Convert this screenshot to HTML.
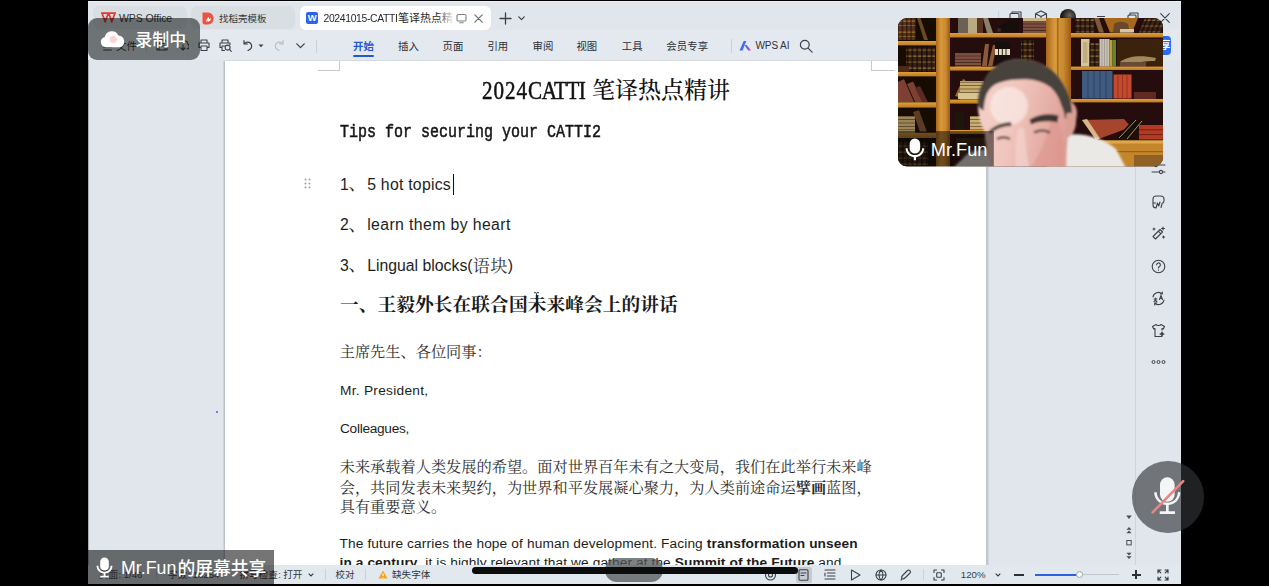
<!DOCTYPE html>
<html lang="zh">
<head>
<meta charset="utf-8">
<title>Screen share</title>
<style>
*{box-sizing:border-box;margin:0;padding:0}
html,body{width:1269px;height:586px;overflow:hidden;background:#000}
body{position:relative;font-family:"Liberation Sans",sans-serif;color:#222}
.abs{position:absolute}
.nw{white-space:nowrap}
#screen{left:88px;top:1px;width:1093px;height:583.300px;background:#e1e6ed;overflow:hidden}
/* everything inside #screen uses page coordinates via an inner offset layer */
#L{position:absolute;left:-88px;top:-1px;width:1269px;height:586px}
.tab{top:6px;height:23px;border-radius:6px;background:#d9dee3}
.tabtxt{font-size:10.5px;color:#333;line-height:12px;white-space:nowrap}
.menu{top:40px;font-size:10.5px;line-height:12px;color:#2b2f36;white-space:nowrap;width:44px;text-align:center}
.ico{stroke:#3c4047;fill:none;stroke-width:1.1;stroke-linecap:round;stroke-linejoin:round}
.sb{font-size:9.5px;line-height:11px;color:#33373d;white-space:nowrap;top:569px}
.ln{position:absolute;white-space:nowrap;transform-origin:0 50%}
.cj{position:absolute;white-space:nowrap;text-align:justify;text-align-last:justify;font-family:"Liberation Serif","Noto Serif CJK SC",serif;color:#2a2a2a}
.h{color:transparent!important;-webkit-text-stroke:0!important}
.cj{color:transparent!important}
.en{font-family:"Liberation Sans",sans-serif;color:#1d1d1d}
.us{font-family:"Liberation Sans","Noto Sans CJK SC",sans-serif}
.ds{font-family:"Liberation Serif","Noto Serif CJK SC",serif}
</style>
</head>
<body>
<div id="screen" class="abs"><div id="L">

<!-- ===== title/tab bar ===== -->
<div class="abs" style="left:88px;top:1px;width:1093px;height:29px;background:#e1e6ed"></div>
<div class="abs" style="left:88px;top:1px;width:1093px;height:1px;background:#eef1f5"></div>

<!-- tab 1 : WPS Office -->
<div class="abs tab" style="left:93px;width:94px"></div>
<svg class="abs" style="left:101px;top:12px" width="15" height="11" viewBox="0 0 15 11"><path d="M1 1.200h6.300l-3.150 8.300zM7.700 1.200h6.300l-3.150 8.300z" fill="none" stroke="#e8372c" stroke-width="1.700" stroke-linejoin="miter"/></svg>
<div class="abs tabtxt" style="left:119px;top:12px;letter-spacing:-.1px">WPS Office</div>
<!-- tab 2 -->
<div class="abs tab" style="left:191px;width:104px"></div>
<svg class="abs" style="left:202px;top:12px" width="12" height="13" viewBox="0 0 12 13"><path d="M0.5 0.6h5.6a5.6 5.900 0 0 1 0 11.800h-3.800a1.800 1.800 0 0 1-1.800-1.800z" fill="#ee5240"/><path d="M4.200 9.600c0-2.200 1.200-3.600 2.900-4.600-0.300 1.200 0 1.800 0.600 2.200 0.500-0.500 0.700-1 0.600-1.700 1 1.400 0.400 3.600-1.600 4.100z" fill="#fff"/></svg>
<div class="abs tabtxt h" style="left:219px;top:12.5px;font-size:9.5px"></div>
<!-- active tab -->
<div class="abs" style="left:300px;top:6px;width:191px;height:23.800px;background:#fff;border-radius:6px"></div>
<div class="abs" style="left:306px;top:12px;width:12.4px;height:12.4px;background:#2b62ee;border-radius:2px;color:#fff;font-size:9.5px;font-weight:bold;line-height:12.4px;text-align:center">W</div>
<div class="abs tabtxt" style="left:323.5px;top:12px;font-size:11px;width:130px;overflow:hidden;color:#262a30;-webkit-mask-image:linear-gradient(90deg,#000 88%,transparent 100%);mask-image:linear-gradient(90deg,#000 88%,transparent 100%)"><span id="tabl" style="font-size:10.400px;letter-spacing:-.35px">20241015-CATTI</span><span class="h"></span></div>
<svg class="abs ico" style="left:456px;top:13px;stroke:#7b8088" width="11" height="11" viewBox="0 0 11 11"><rect x="1" y="1.500" width="9" height="6.500" rx="1.200"/><path d="M3.800 9.800h3.400"/></svg>
<svg class="abs ico" style="left:474px;top:14px;stroke:#666b73;stroke-width:1.1" width="9" height="9" viewBox="0 0 9 9"><path d="M0.8 0.8l7.400 7.400M8.200 0.800l-7.400 7.400"/></svg>
<svg class="abs ico" style="left:499px;top:12px;stroke:#3c4047;stroke-width:1.3" width="13" height="13" viewBox="0 0 13 13"><path d="M6.500 1v11M1 6.500h11"/></svg>
<svg class="abs ico" style="left:518px;top:16px;stroke-width:1.2" width="7" height="5" viewBox="0 0 7 5"><path d="M0.8 0.8l2.700 2.800 2.700-2.800"/></svg>
<!-- window controls (partly hidden behind camera tile) -->
<div class="abs" style="left:998px;top:11px;width:1px;height:14px;background:#cdd2da"></div>
<svg class="abs ico" style="left:1009px;top:11px" width="13" height="13" viewBox="0 0 13 13"><rect x="1" y="2.500" width="9" height="9.500" rx="1"/><path d="M3 2.500v-1.500h9v9.500h-2"/></svg>
<svg class="abs ico" style="left:1034px;top:10px" width="14" height="14" viewBox="0 0 14 14"><path d="M7 1l5.500 2.800v6.400l-5.500 2.800-5.500-2.800v-6.400zM1.500 3.800l5.500 2.800 5.500-2.800M7 6.600v6.400"/></svg>
<div class="abs" style="left:1060px;top:9px;width:16px;height:16px;border-radius:50%;background:radial-gradient(circle at 60% 40%,#6b6560 0,#1d1b1a 55%,#0d0d0d 100%)"></div>
<div class="abs" style="left:1097px;top:16px;width:8px;height:1.3px;background:#3c4047"></div>
<svg class="abs ico" style="left:1127px;top:12px" width="12" height="12" viewBox="0 0 12 12"><rect x="1" y="3" width="8" height="8" rx="1"/><path d="M3 3v-2h8v8h-2"/></svg>
<svg class="abs ico" style="left:1160px;top:13px;stroke-width:1.1" width="10" height="10" viewBox="0 0 10 10"><path d="M0.700 0.700l8.600 8.600M9.300 0.700l-8.600 8.600"/></svg>

<!-- TOOLBAR -->
<div class="abs" style="left:88px;top:30px;width:1093px;height:30px;background:#e3e9ee"></div>

<!-- quick access (left) -->
<svg class="abs ico" style="left:103px;top:43px;stroke-width:1.1" width="9" height="8" viewBox="0 0 9 8"><path d="M0.600 1h7.800M0.600 4h7.800M0.600 7h7.800"/></svg>
<div class="abs tabtxt h" style="left:116px;top:41px;font-size:10.5px"></div>
<div class="abs" style="left:146px;top:40px;width:1px;height:13px;background:#cdd2da"></div>
<svg class="abs ico" style="left:156px;top:39px" width="12" height="12" viewBox="0 0 12 12"><path d="M1 1h8l2 2v8h-10zM3 1v3.500h5v-3.500M3 11v-4h6v4"/></svg>
<svg class="abs ico" style="left:177px;top:39px" width="12" height="12" viewBox="0 0 12 12"><path d="M2 8.500a3.200 3.200 0 1 1 3.200-6 3.600 3.600 0 0 1 5.800 3 2.400 2.400 0 0 1-1 4.500M6 6v5M4 9l2 2 2-2"/></svg>
<svg class="abs ico" style="left:198px;top:39px" width="12" height="12" viewBox="0 0 12 12"><path d="M3 4v-3h6v3M3 8.500h-2v-4.500h10v4.500h-2M3 7h6v4.500h-6z"/></svg>
<svg class="abs ico" style="left:219px;top:39px" width="13" height="13" viewBox="0 0 13 13"><path d="M3 4v-3h6v3M3 8.500h-2v-4.500h10v1.500M3 7h2.500M3 7v4.500h2.500"/><circle cx="8.600" cy="8.600" r="2.500"/><path d="M10.500 10.500l1.800 1.800"/></svg>
<svg class="abs ico" style="left:243px;top:39px;stroke-width:1.2" width="10" height="12" viewBox="0 0 10 12"><path d="M1 1.500v3.500h3.500M1.200 5a4 4 0 1 1 5.500 5.500l-1.700 1"/></svg>
<svg class="abs" style="left:258px;top:44px" width="6" height="4" viewBox="0 0 6 4"><path d="M0.500 0.500l2.500 2.800 2.500-2.800z" fill="#3c4047"/></svg>
<svg class="abs ico" style="left:274px;top:39px;stroke:#b9bec7;stroke-width:1.2" width="10" height="12" viewBox="0 0 10 12"><path d="M9 1.500v3.500h-3.500M8.800 5a4 4 0 1 0-5.500 5.500l1.700 1"/></svg>
<svg class="abs ico" style="left:296px;top:43px;stroke-width:1.2" width="9" height="6" viewBox="0 0 9 6"><path d="M0.800 0.800l3.700 3.900 3.700-3.900"/></svg>
<div class="abs" style="left:316px;top:40px;width:1px;height:13px;background:#cdd2da"></div>
<!-- ribbon menu -->
<div class="abs menu h" style="left:341.300px;color:#2458d6;font-weight:bold"></div>
<div class="abs" style="left:353px;top:55px;width:20.600px;height:1.800px;background:#2458d6;border-radius:1px"></div>
<div class="abs menu h" style="left:386.200px"></div>
<div class="abs menu h" style="left:430.700px"></div>
<div class="abs menu h" style="left:475.500px"></div>
<div class="abs menu h" style="left:520.700px"></div>
<div class="abs menu h" style="left:565px"></div>
<div class="abs menu h" style="left:610.300px"></div>
<div class="abs menu h" style="left:657.300px;width:60px"></div>
<div class="abs" style="left:731px;top:38.500px;width:1px;height:14px;background:#cdd2da"></div>
<svg class="abs" style="left:739px;top:40px" width="13" height="11" viewBox="0 0 13 11"><defs><linearGradient id="ai" x1="0" y1="0" x2="1" y2="1"><stop offset="0" stop-color="#3b6cf6"/><stop offset=".55" stop-color="#7a4cf0"/><stop offset="1" stop-color="#f0568b"/></linearGradient></defs><path d="M0.500 10.500l4.200-9.600h2.600l-3.800 9.600z" fill="#3b6cf6"/><path d="M5.600 5.200l2-0.300 4.600 5.600h-3z" fill="url(#ai)"/></svg>
<div class="abs menu" style="left:755.500px;width:33px;text-align:left;font-size:10px;color:#2f333a;letter-spacing:-.1px">WPS AI</div>
<svg class="abs ico" style="left:799px;top:39px;stroke-width:1.200" width="14" height="14" viewBox="0 0 14 14"><circle cx="5.800" cy="5.800" r="4.400"/><path d="M9.100 9.100l4 4"/></svg>
<!-- share button peeking out right of camera tile -->
<div class="abs" style="left:1140px;top:36px;width:30.500px;height:18.600px;border-radius:4px;background:#2a6af2"></div>
<div class="abs" style="left:1163px;top:40px;font-size:9.500px;line-height:11px;color:#fff;font-weight:bold;width:6px;overflow:hidden;direction:rtl;color:transparent"></div>


<!-- ===== document area ===== -->
<div class="abs" style="left:88px;top:60px;width:1093px;height:505px;background:#e1e6ed"></div>
<div class="abs" id="page" style="left:225px;top:60.700px;width:761.300px;height:510px;background:#fff;box-shadow:-1.500px 0 0 #bcc3ce,2.500px 0 0 #c2c8cf,0 -1px 0 #d5dae1"></div>

<!-- crop marks -->
<div class="abs" style="left:318px;top:61px;width:22px;height:9.500px;border-right:1px solid #c9c9c9;border-bottom:1px solid #c9c9c9"></div>
<div class="abs" style="left:871px;top:61px;width:24px;height:9.500px;border-left:1px solid #c9c9c9;border-bottom:1px solid #c9c9c9"></div>
<!-- title -->
<div id="t1" class="ln" style="left:481.500px;top:76px;height:30px;line-height:30px;font-family:'Liberation Serif',serif;font-size:24.500px;color:#111;font-weight:bold"><span id="t1a" style="display:inline-block;transform:scaleX(.86);transform-origin:0 50%;font-weight:normal;-webkit-text-stroke:.5px #111;letter-spacing:-.54px"><span style="letter-spacing:1.130px">2024</span>CATTI</span></div>
<div id="t1b" class="cj" style="left:592px;top:76px;width:138px;height:30px;line-height:30px;font-size:22.400px;font-weight:500"></div>
<!-- subtitle (monospace SimSun-like latin) -->
<div id="t2" class="ln" style="left:340px;top:122.100px;height:22px;line-height:22px;font-family:'Liberation Mono',monospace;font-size:15px;font-weight:normal;-webkit-text-stroke:.45px #161616;color:#161616;transform:scaleY(1.24)">Tips for securing your CATTI2</div>
<!-- numbered tips -->
<svg class="abs" style="left:304px;top:178px" width="7" height="11" viewBox="0 0 7 11" fill="#9a9fa8"><circle cx="1.500" cy="1.500" r="1"/><circle cx="5.500" cy="1.500" r="1"/><circle cx="1.500" cy="5.500" r="1"/><circle cx="5.500" cy="5.500" r="1"/><circle cx="1.500" cy="9.500" r="1"/><circle cx="5.500" cy="9.500" r="1"/></svg>
<div class="ln en" style="left:340px;top:174px;height:22px;line-height:22px;font-size:15.800px">1<span class="h" style="display:inline-block;width:18.400px;height:10px;overflow:hidden;text-align:left;font-family:'Liberation Serif',serif"></span><span id="l1" style="letter-spacing:.25px">5 hot topics</span></div>
<div class="abs" style="left:452.600px;top:173.500px;width:1.400px;height:21.500px;background:#111"></div>
<div class="ln en" style="left:340px;top:214.300px;height:22px;line-height:22px;font-size:15.800px">2<span class="h" style="display:inline-block;width:18.400px;height:10px;overflow:hidden;text-align:left;font-family:'Liberation Serif',serif"></span><span id="l2" style="letter-spacing:.39px">learn them by heart</span></div>
<div class="ln en" style="left:340px;top:254.600px;height:22px;line-height:22px;font-size:15.800px">3<span class="h" style="display:inline-block;width:18.400px;height:10px;overflow:hidden;text-align:left;font-family:'Liberation Serif',serif"></span><span id="l3" style="letter-spacing:0">Lingual blocks(<span class="h" style="display:inline-block;width:35.200px;height:12px;overflow:hidden;font-family:'Liberation Serif',serif;font-size:16.500px;letter-spacing:0"></span>)</span></div>
<!-- heading -->
<div id="h1" class="cj" style="left:340px;top:291.700px;width:338px;height:24px;line-height:24px;font-size:17.800px;font-weight:bold;color:#1a1a1a"></div>
<!-- I-beam mouse cursor -->
<svg class="abs" style="left:533px;top:292px" width="7" height="13" viewBox="0 0 7 13"><path d="M1 0.700h2l0.500 0.600 0.500-0.600h2M3.500 1.300v10.400M1 12.300h2l0.500-0.600 0.500 0.600h2M2.300 6.500h2.400" stroke="#222" stroke-width=".9" fill="none"/></svg>
<!-- body -->
<div id="b1" class="cj" style="left:340px;top:341.600px;width:152px;height:21px;line-height:21px;font-size:15px"></div>
<div id="b2" class="ln en" style="left:340px;top:380.600px;height:20px;line-height:20px;font-size:13.700px;letter-spacing:.28px">Mr. President,</div>
<div id="b3" class="ln en" style="left:340px;top:418.900px;height:20px;line-height:20px;font-size:13.700px;letter-spacing:-.3px">Colleagues,</div>
<div id="b4" class="cj" style="left:340px;top:456.600px;width:532px;height:21px;line-height:21px;font-size:15px"></div>
<div id="b5" class="cj" style="left:340px;top:476.800px;width:532px;height:21px;line-height:21px;font-size:15px"></div>
<div id="b6" class="cj" style="left:340px;top:495.600px;width:106.400px;height:21px;line-height:21px;font-size:15px"></div>
<div id="b7" class="ln en" style="left:339.500px;top:534.200px;height:20px;line-height:20px;font-size:13.700px;letter-spacing:.13px">The future carries the hope of human development. Facing <b>transformation unseen</b></div>
<div id="b8" class="ln en" style="left:339.500px;top:552.800px;height:20px;line-height:20px;font-size:13.700px;letter-spacing:.1px"><b>in a century</b>, it is highly relevant that we gather at the <b>Summit of the Future</b> and</div>


<div class="abs" style="left:216.200px;top:410.800px;width:2px;height:2px;border-radius:50%;background:#3b63e6"></div>
<div class="abs" style="left:88px;top:60px;width:1.200px;height:524px;background:#a9aeb5"></div>
<!-- ===== right sidebar ===== -->
<div class="abs" style="left:1135px;top:30px;width:1px;height:535px;background:#cfd4dc"></div>

<svg class="abs ico" style="left:1151px;top:162px" width="15" height="14" viewBox="0 0 15 14"><path d="M1 3h13M1 10h13"/><circle cx="5" cy="3" r="1.600" fill="#e1e6ed"/><circle cx="10" cy="10" r="1.600" fill="#e1e6ed"/></svg>
<svg class="abs ico" style="left:1151px;top:195px" width="15" height="14" viewBox="0 0 15 14"><path d="M2 4c0-2 1.500-3 3.500-3h4c2 0 3.500 1 3.500 3v2c0 1.500-1 2-2 2.500M2 4v6c0 2 1 3 3 3M2 8h2.500M5 13l1.500-5 1.200 3 1.300-4M11 9l-1 3.500"/></svg>
<svg class="abs ico" style="left:1151px;top:226px" width="15" height="15" viewBox="0 0 15 15"><path d="M2 10.500l7-7 2.500 2.500-7 7zM7.300 5.200l2.500 2.500M12 1v3M10.500 2.500h3M3 2v2M2 3h2M12.500 10v2M11.500 11h2"/></svg>
<svg class="abs ico" style="left:1151px;top:259px" width="15" height="15" viewBox="0 0 15 15"><circle cx="7.500" cy="7.500" r="6.300"/><path d="M5.600 5.800a1.900 1.900 0 1 1 2.800 1.700c-0.600 0.400-0.900 0.700-0.900 1.500M7.500 11v0.300"/></svg>
<svg class="abs ico" style="left:1151px;top:291px" width="15" height="15" viewBox="0 0 15 15"><path d="M2 6a5.500 5.500 0 0 1 9-3.300M11.300 1v2h-2M13 9a5.500 5.500 0 0 1-9 3.300M3.700 14v-2h2M8.500 8.500l1.500-4 1.500 4M9 7.500h2M3 8h3M4.500 7v1c0 1.500-0.500 2.200-1.500 2.700M4.500 9c0.300 0.800 0.800 1.300 1.500 1.700"/></svg>
<svg class="abs ico" style="left:1151px;top:323px" width="15" height="15" viewBox="0 0 15 15"><path d="M5 1.500l-3.500 2 1.200 2.500 1.300-0.500v8h7v-3M10 1.500l3.500 2-1.200 2.500-1.300-0.500v1.500M5 1.500c0.500 1.300 4.500 1.300 5 0M11 9l0.600 1.400 1.400 0.600-1.400 0.600-0.600 1.400-0.600-1.400-1.400-0.600 1.400-0.600z"/></svg>
<svg class="abs" style="left:1151px;top:359px" width="15" height="6" viewBox="0 0 15 6" fill="none" stroke="#3c4047" stroke-width="1"><circle cx="2.500" cy="3" r="1.500"/><circle cx="7.500" cy="3" r="1.500"/><circle cx="12.500" cy="3" r="1.500"/></svg>
<!-- scroll nav buttons -->
<svg class="abs" style="left:1125px;top:514px" width="8" height="46" viewBox="0 0 8 46" fill="#4a4e55" stroke="none"><path d="M1.200 1.500h5.600l-2.800 3.600z"/><path d="M4 13l2.600 2.800h-5.200zM4 16.500l2.600 2.800h-5.200z"/><rect x="1.800" y="26.500" width="4.400" height="4.400" fill="none" stroke="#4a4e55" stroke-width="1"/><path d="M4 41.500l-2.600-2.800h5.200zM4 45l-2.600-2.800h5.200z"/></svg>


<!-- ===== status bar ===== -->
<div class="abs" style="left:88px;top:565.300px;width:1093px;height:20px;background:#e1e8ee"></div>

<div class="abs sb h" style="left:99px"></div><div class="abs sb" style="left:118.500px;color:#50555c">: 1/46</div>
<div class="abs" style="left:156px;top:569px;width:1px;height:11px;background:#cdd2da"></div>
<div class="abs sb h" style="left:168px"></div><div class="abs sb" style="left:187.500px;color:#50555c">: 16254</div>
<div class="abs" style="left:222px;top:569px;width:1px;height:11px;background:#cdd2da"></div>
<div class="abs sb h" style="left:239.400px"></div><div class="abs sb" style="left:278.300px">:</div><div class="abs sb h" style="left:283.200px"></div>
<svg class="abs" style="left:308px;top:573px" width="6" height="4" viewBox="0 0 6 4"><path d="M0.700 0.700l2.300 2.300 2.300-2.300" stroke="#33373d" stroke-width="1.100" fill="none"/></svg>
<div class="abs" style="left:325px;top:569px;width:1px;height:11px;background:#cdd2da"></div>
<div class="abs sb h" style="left:335.500px"></div>
<div class="abs" style="left:365px;top:569px;width:1px;height:11px;background:#cdd2da"></div>
<svg class="abs" style="left:377.500px;top:569.500px" width="10" height="9" viewBox="0 0 10 9"><path d="M5 0.500l4.500 8h-9z" fill="#f2a51d"/><path d="M5 3.300v2.700M5 7v0.600" stroke="#fff" stroke-width="1"/></svg>
<div class="abs sb h" style="left:392px"></div>
<!-- right part -->
<svg class="abs ico" style="left:764px;top:568.500px" width="13" height="12" viewBox="0 0 13 12"><circle cx="6.500" cy="6" r="5"/><circle cx="6.500" cy="6" r="2"/></svg>
<div class="abs" style="left:795.500px;top:566.500px;width:16px;height:16px;background:#c6cbd3;border-radius:2px"></div>
<svg class="abs ico" style="left:798px;top:568.500px" width="11" height="12" viewBox="0 0 11 12"><rect x="1" y="0.800" width="9" height="10.400" rx="1"/><path d="M3 4h5M3 6.500h3"/></svg>
<svg class="abs ico" style="left:823.500px;top:569px" width="12" height="11" viewBox="0 0 12 11"><path d="M1 1h10M3.500 4h7.500M3.500 7h7.500M1 10h10M1 4v3"/></svg>
<svg class="abs ico" style="left:849.500px;top:568.500px" width="11" height="12" viewBox="0 0 11 12"><path d="M1.500 1l8.500 5-8.500 5z"/></svg>
<svg class="abs ico" style="left:875px;top:569px" width="12" height="12" viewBox="0 0 12 12"><circle cx="6" cy="6" r="5"/><path d="M1 6h10M6 1c-2.600 2.500-2.600 7.500 0 10M6 1c2.600 2.500 2.600 7.500 0 10"/></svg>
<svg class="abs ico" style="left:900px;top:568.500px" width="12" height="12" viewBox="0 0 12 12"><path d="M2 10c-1-1.500 0-3 1-4l4.500-4.500c1.500-1.300 3.800 0.800 2.500 2.500l-4.500 4.500c-1 1-2.500 1.500-3.500 1.500zM2 10l-1 1.200"/></svg>
<div class="abs" style="left:922.500px;top:569px;width:1px;height:11px;background:#cdd2da"></div>
<svg class="abs ico" style="left:933px;top:569px" width="12" height="12" viewBox="0 0 12 12"><path d="M1 3.500v-2.500h2.500M8.500 1h2.500v2.500M11 8.500v2.500h-2.500M3.500 11h-2.500v-2.500"/><rect x="3.700" y="3.700" width="4.600" height="4.600" rx=".8"/></svg>
<div class="abs sb" style="left:960.800px;font-size:9.700px;top:569.300px;color:#3a3e45">120%</div>
<svg class="abs" style="left:994.500px;top:573px" width="6" height="4" viewBox="0 0 6 4"><path d="M0.700 0.700l2.300 2.300 2.300-2.300" stroke="#33373d" stroke-width="1.100" fill="none"/></svg>
<div class="abs" style="left:1014px;top:574px;width:9.500px;height:1.600px;background:#2b2f36"></div>
<div class="abs" style="left:1035px;top:574px;width:84px;height:1.300px;background:#c3c8d0"></div>
<div class="abs" style="left:1035px;top:573.700px;width:44px;height:2px;background:#2a62e0"></div>
<div class="abs" style="left:1076px;top:571.200px;width:7px;height:7px;border-radius:50%;background:#fff;border:1px solid #9aa0aa"></div>
<div class="abs" style="left:1131.500px;top:574px;width:9px;height:1.600px;background:#2b2f36"></div>
<div class="abs" style="left:1135.200px;top:570.300px;width:1.600px;height:9px;background:#2b2f36"></div>
<svg class="abs ico" style="left:1156.500px;top:569px;stroke-width:1.200" width="12" height="12" viewBox="0 0 12 12"><path d="M1 4v-3h3M8 1h3v3M11 8v3h-3M4 11h-3v-3M1 1l2.800 2.800M11 1l-2.800 2.800M11 11l-2.800-2.800M1 11l2.800-2.800"/></svg>


<!-- CJK-A -->
<svg class="abs" style="left:0;top:0;pointer-events:none" width="1269" height="586" viewBox="0 0 1269 586"><defs><clipPath id="tabclip"><rect x="390" y="8" width="63" height="20"/></clipPath><clipPath id="btnclip"><rect x="1140" y="36" width="30.500" height="18.600"/></clipPath><linearGradient id="tabfade" x1="0" y1="0" x2="1" y2="0"><stop offset="0" stop-color="#fff" stop-opacity="0"/><stop offset="1" stop-color="#fff"/></linearGradient></defs>
<text class="us" x="219" y="21.710" font-size="9.500" fill="#33373d">找稻壳模板</text>
<g clip-path="url(#tabclip)"><text class="us" x="398" y="22.280" font-size="11" fill="#262a30">笔译热点精讲</text></g><rect x="438" y="9" width="16" height="19" fill="url(#tabfade)"/>
<text class="us" x="116" y="50.390" font-size="10.500" fill="#30343a">文件</text>
<text class="us" x="353" y="50.150" font-size="10.400" font-weight="bold" fill="#2458d6">开始</text>
<text class="us" x="398" y="50.150" font-size="10.400" fill="#2b2f36">插入</text>
<text class="us" x="442.500" y="50.150" font-size="10.400" fill="#2b2f36">页面</text>
<text class="us" x="487.400" y="50.150" font-size="10.400" fill="#2b2f36">引用</text>
<text class="us" x="532.500" y="50.150" font-size="10.400" fill="#2b2f36">审阅</text>
<text class="us" x="576.400" y="50.150" font-size="10.400" fill="#2b2f36">视图</text>
<text class="us" x="621.800" y="50.150" font-size="10.400" fill="#2b2f36">工具</text>
<text class="us" x="666.300" y="50.150" font-size="10.400" letter-spacing="0.100" fill="#2b2f36">会员专享</text>
<g clip-path="url(#btnclip)"><text class="us" x="1160.500" y="49.100" font-size="10" font-weight="bold" fill="#fff">享</text></g>
<text class="us" x="99" y="578.250" font-size="9.600" fill="#50555c">页面</text>
<text class="us" x="168" y="578.250" font-size="9.600" fill="#50555c">字数</text>
<text class="us" x="239.400" y="578.250" font-size="9.600" fill="#33373d">拼写检查</text>
<text class="us" x="283.200" y="578.250" font-size="9.600" fill="#33373d">打开</text>
<text class="us" x="335.500" y="578.170" font-size="9.400" fill="#33373d">校对</text>
<text class="us" x="392" y="578.250" font-size="9.600" fill="#33373d">缺失字体</text>
<text class="ds" x="591.900" y="97.940" font-size="23" font-weight="500" fill="#111" textLength="138" lengthAdjust="spacing">笔译热点精讲</text>
<text class="ds" x="348.600" y="190.200" font-size="17.600" fill="#1d1d1d">、</text>
<text class="ds" x="348.600" y="230.500" font-size="17.600" fill="#1d1d1d">、</text>
<text class="ds" x="348.600" y="270.900" font-size="17.600" fill="#1d1d1d">、</text>
<text class="ds" x="472.700" y="271.740" font-size="17.200" letter-spacing="0.400" fill="#333">语块</text>
<text class="ds" x="340" y="311.210" font-size="18.700" font-weight="bold" fill="#1a1a1a" textLength="337.700" lengthAdjust="spacing">一、王毅外长在联合国未来峰会上的讲话</text>
<text class="ds" x="339.700" y="357.480" font-size="15.200" fill="#2e2e2e" textLength="152" lengthAdjust="spacing">主席先生、各位同事：</text>
<text class="ds" x="339.700" y="472.380" font-size="15.200" fill="#2e2e2e" textLength="532" lengthAdjust="spacing">未来承载着人类发展的希望。面对世界百年未有之大变局，我们在此举行未来峰</text>
<text class="ds" x="339.700" y="492.580" font-size="15.200" fill="#2e2e2e" textLength="532" lengthAdjust="spacing">会，共同发表未来契约，为世界和平发展凝心聚力，为人类前途命运<tspan font-weight="bold">擘画</tspan>蓝图，</text>
<text class="ds" x="339.700" y="511.980" font-size="15.200" fill="#2e2e2e" textLength="106.400" lengthAdjust="spacing">具有重要意义。</text>
</svg>
<!-- /CJK-A -->
</div></div>

<!-- ===== overlays (meeting client) ===== -->

<!-- recording badge -->
<div class="abs" style="left:88px;top:18px;width:111.500px;height:42px;border-radius:9px;background:rgba(6,12,12,.53)"></div>
<svg class="abs" style="left:100px;top:30.500px" width="26" height="17" viewBox="0 0 26 17"><path d="M6 16.300a5.300 5.300 0 0 1-1.200-10.400 7.200 7.200 0 0 1 13.600-1.300 6 6 0 0 1 1.600 11.700z" fill="#fff"/><circle cx="13.300" cy="8.300" r="3.600" fill="#fbd3d3"/></svg>
<div class="abs nw" style="left:135px;top:29.800px;font-size:17px;line-height:20px;color:transparent;letter-spacing:0"></div>

<!-- camera tile -->
<svg class="abs" style="left:898px;top:18px" width="265" height="148.500" viewBox="0 0 265 148.500">
<defs>
<clipPath id="tc"><rect x="0" y="0" width="265" height="148.500" rx="9" ry="9"/></clipPath>
<linearGradient id="wd" x1="0" y1="0" x2="1" y2="0"><stop offset="0" stop-color="#a8661c"/><stop offset=".35" stop-color="#d89a3c"/><stop offset=".7" stop-color="#c88930"/><stop offset="1" stop-color="#9a5a16"/></linearGradient>
<linearGradient id="sh" x1="0" y1="0" x2="0" y2="1"><stop offset="0" stop-color="#e0a03c"/><stop offset="1" stop-color="#bb7a20"/></linearGradient>
<pattern id="bk1" width="4.400" height="11" patternUnits="userSpaceOnUse"><rect width="4.400" height="11" fill="#2a120b"/><rect x=".5" width="3.300" height="11" fill="#55301a"/><rect x=".5" y="2.500" width="3.300" height="1.300" fill="#9a7430"/><rect x=".5" y="7" width="3.300" height="1" fill="#8a6428"/></pattern>
<pattern id="bk2" width="4.800" height="12" patternUnits="userSpaceOnUse"><rect width="4.800" height="12" fill="#130907"/><rect x=".6" width="3.500" height="12" fill="#3a2115"/><rect x=".6" y="1.500" width="3.500" height="1.300" fill="#8f7438"/><rect x=".6" y="7.500" width="3.500" height="1.200" fill="#7d6430"/></pattern>
<pattern id="bk3" width="30" height="3.200" patternUnits="userSpaceOnUse"><rect width="30" height="3.200" fill="#7d5141"/><rect y="2.500" width="30" height=".7" fill="#3c1f17"/></pattern>
<pattern id="bk4" width="30" height="3.400" patternUnits="userSpaceOnUse"><rect width="30" height="3.400" fill="#c7ae73"/><rect y="2.600" width="30" height=".8" fill="#6d5430"/></pattern>
<filter id="bl" x="-10%" y="-10%" width="120%" height="120%"><feGaussianBlur stdDeviation="1.300"/></filter>
<filter id="bl2" x="-10%" y="-10%" width="120%" height="120%"><feGaussianBlur stdDeviation=".6"/></filter>
<linearGradient id="skin2" x1="0" y1="0" x2="1" y2=".25"><stop offset="0" stop-color="#f3d3cc"/><stop offset=".45" stop-color="#f0c6bd"/><stop offset="1" stop-color="#dd9f96"/></linearGradient><radialGradient id="skin" cx=".42" cy=".38" r=".75"><stop offset="0" stop-color="#f7dcd6"/><stop offset=".45" stop-color="#eebdb3"/><stop offset="1" stop-color="#d69a8e"/></radialGradient>
</defs>
<g clip-path="url(#tc)">
<rect width="265" height="148.500" fill="#24100a"/>
<g filter="url(#bl2)">
<!-- left bay -->
<rect x="0" y="0" width="38" height="148.500" fill="#150806"/>
<rect x="0" y="0" width="17.600" height="22" fill="url(#bk1)"/>
<path d="M19 0h3.500l7.500 22h-4z" fill="#6a4a22"/>
<rect x="8" y="29.500" width="29" height="24" fill="url(#bk2)"/>
<rect x="0" y="48" width="11" height="6" fill="#4b2a1b"/>
<path d="M0 64l6-3 10 23h-16zM9 66l6-2.500 10 20.500h-8z" fill="#7e4031"/>
<path d="M17 70l5-2 8 16h-6z" fill="#5b2c22"/>
<rect x="0" y="98" width="17" height="17" fill="url(#bk4)" opacity=".75"/>
<path d="M15 94l6-2 8 22h-7z" fill="#5a3a26"/>
<rect x="0" y="124" width="30" height="24" fill="url(#bk2)"/>
<rect x="0" y="23" width="38" height="4.400" fill="url(#sh)"/>
<rect x="0" y="54" width="38" height="4.400" fill="url(#sh)"/>
<rect x="0" y="84.300" width="38" height="5.300" fill="url(#sh)"/>
<rect x="0" y="114.700" width="38" height="5.300" fill="url(#sh)"/>
<!-- middle bay -->
<rect x="52" y="0" width="96" height="148.500" fill="#250c09"/>
<rect x="60" y="0" width="10" height="15" fill="#6b6253"/><rect x="70" y="0" width="9" height="15" fill="#b9aa84"/><rect x="79" y="0" width="6" height="15" fill="#5a3524"/><path d="M85 0h5l5 15h-6z" fill="#8a8068"/>
<path d="M100 9l12-7h9v12h-16z" fill="#120b08"/><circle cx="101" cy="12" r="2" fill="#3a2a1a"/>
<rect x="125" y="2" width="23" height="13" fill="url(#bk3)"/><rect x="125" y="0" width="23" height="3" fill="#c9b48a"/>
<rect x="57" y="35" width="26" height="13.600" fill="url(#bk3)"/>
<path d="M84 48l3-22h4l-2 22zM90 48l5-21h3.500l-4 21z" fill="#8b5a3a"/>
<rect x="97" y="24" width="15" height="24" fill="#160d09"/><rect x="97" y="31" width="15" height="6" fill="#e9dcc0"/><path d="M100.500 24v24M104.300 24v24M108 24v24" stroke="#160d09" stroke-width=".9"/>
<rect x="123" y="22" width="13" height="26" fill="url(#bk2)"/>
<path d="M57 78l8-17 2.500 1-7 17z" fill="#8b6a3a"/>
<rect x="62" y="63" width="24" height="18.600" fill="url(#bk4)"/><rect x="60" y="75" width="28" height="6" fill="#d9c590"/>
<rect x="57" y="93" width="9" height="19" fill="#1a120e"/>
<rect x="72" y="98" width="19" height="14" fill="url(#bk4)"/>
<rect x="58" y="120" width="30" height="20" fill="#3a2116"/>
<rect x="52" y="15" width="96" height="4.500" fill="url(#sh)"/>
<rect x="52" y="48.600" width="96" height="4" fill="url(#sh)"/>
<rect x="52" y="81.600" width="96" height="4" fill="url(#sh)"/>
<rect x="52" y="112" width="96" height="4" fill="url(#sh)"/>
<!-- right bay -->
<rect x="173" y="0" width="92" height="148.500" fill="#27100a"/>
<rect x="177" y="0" width="19" height="14.500" fill="url(#bk2)"/>
<path d="M196 0h5l5 14.500h-5z" fill="#7d5a36"/>
<path d="M206 0h34l-6 14.500h-22z" fill="#a8681f"/>
<path d="M216 6c4-3 10-3 14 0l2 8.500h-17z" fill="#6a4a2a"/><rect x="222" y="11" width="14" height="3.500" fill="#d5c7a5"/>
<g transform="skewX(-22)"><rect x="247" y="0" width="22" height="14.500" fill="url(#bk2)"/></g>
<rect x="183" y="21" width="8.500" height="27.600" fill="#d6c69a"/><rect x="185" y="24" width="4.500" height="21" fill="#bfae80"/>
<rect x="191.500" y="25" width="10" height="23.600" fill="url(#bk2)"/>
<rect x="201.500" y="21" width="10" height="27.600" fill="#c9c2b8"/><path d="M204 21v27.600M206.500 21v27.600M209 21v27.600" stroke="#8e867c" stroke-width=".6"/>
<rect x="211.500" y="22" width="3" height="26.600" fill="#b9a03a"/><rect x="214.500" y="22" width="3.500" height="26.600" fill="#67832c"/>
<rect x="219" y="21" width="46" height="27.600" fill="#3b2210"/>
<path d="M222 44c8-6 20-7 36-4l-1 3c-10 0-18 1-24 5h-11z" fill="#a08a5a"/><rect x="222" y="44" width="26" height="4.600" fill="#6b4a38"/>
<rect x="184" y="53" width="30.500" height="27.500" fill="#3f5a80"/><path d="M190 53v27.500M196 53v27.500M202 53v27.500M208 53v27.500" stroke="#2a3e5c" stroke-width=".9"/>
<rect x="215.500" y="56.500" width="18" height="24" fill="#c5492f"/><path d="M220 56.500v24M224.500 56.500v24M229 56.500v24" stroke="#8e2e1c" stroke-width=".8"/>
<rect x="236" y="74" width="22" height="7" fill="#5e2a22"/>
<path d="M184 102l14 20 35-13-7-8z" fill="#a6452d"/><path d="M184 102l14 20 4-1.500-13-19.500z" fill="#d9b58a"/>
<path d="M218 120l17-18 4 2-15 18zM226 121l15-18 3.500 2-13 17z" fill="#15100c"/><path d="M221 120l17-18M229 121l15-18" stroke="#c8a64e" stroke-width=".9"/>
<rect x="241" y="107" width="24" height="14.500" fill="#b23a24"/><path d="M241 111.800h24M241 116.600h24" stroke="#6d1e14" stroke-width=".9"/>
<rect x="173" y="15" width="92" height="4.500" fill="url(#sh)"/>
<rect x="173" y="48.600" width="92" height="3.400" fill="url(#sh)"/>
<rect x="173" y="81" width="92" height="3.400" fill="url(#sh)"/>
<rect x="173" y="122.500" width="92" height="26" fill="#c4862c"/><rect x="173" y="122.500" width="92" height="3" fill="#e0a84c"/><rect x="173" y="133" width="92" height="1.200" fill="#9a6218"/>
<rect x="236" y="137" width="29" height="11.500" fill="#6f4a22" opacity=".6"/>
<!-- pillars -->
<rect x="38" y="0" width="14" height="148.500" fill="url(#wd)"/>
<rect x="148" y="0" width="25" height="148.500" fill="url(#wd)"/><rect x="159" y="0" width="1.500" height="148.500" fill="#a5681c"/>
</g>
<!-- person (generic shapes) -->
<g filter="url(#bl)">
<path d="M168 117c18-3 38 4 50 14l10 19h-64z" fill="#ebe9e5"/>
<path d="M55 150l15-14.500c6-3 14-4.500 24-4.500l2 19z" fill="#e4e2de"/>
<path d="M92.700 150c-3-12-5.600-24-6.100-36-5-10-7.300-20-6.600-31 1-9 4-17 8.600-24.400 7-11 18-17.400 32.400-17.400 16 0 30 6 39 17.400 6 8 10 16 12.600 24.400 4 3 7 7 6.200 14-0.800 9-3.800 17-8.800 20-1 10-1.500 21-1.500 33z" fill="url(#skin2)"/>
<path d="M80 88c-0.700-11 3-21.500 8.600-29.400 7-11 18-17.400 32.400-17.400 16 0 30 6 39 17.400 6 8 10 16 12.600 24.400 1.200 5 1.600 11 1.400 17l-7 0.500c-0.500-5-1.500-9-3.500-12.500-2-8-5.500-13.500-10.500-18.500-7.400-5.200-15.400-7.700-24.400-8.200-9.600-0.400-18.600 0.600-26.600 3.100-6.400 1.600-10.900 6.100-13.900 13.100-1.500 5-2.100 10-2.500 15-2-0.700-4-2-5.600-4.500z" fill="#47423a"/>
<path d="M168 96c5-3 10.500 0 10 8-0.500 8-3.500 14-8.500 15.500z" fill="#d99f94"/>
<path d="M154 96c9 10 13 26 12 54h-34c10-12 18-32 22-54z" fill="#de8f8c" opacity=".5"/>
<ellipse cx="111" cy="88" rx="19" ry="19" fill="#fdf1ee" opacity=".6"/>
<path d="M90.700 113c6-6 14-8.500 22.300-9l0.500 4c-8 0.300-15 2.600-21.300 7.800z" fill="#40372f" opacity=".85"/>
<path d="M131.500 101.500c9-5.500 20-6.500 29-4l-1 7c-9-2-18-1.500-26.500 2z" fill="#332c26" opacity=".92"/>
<path d="M99 121c4-2 9-2 13 0M136 114.500c5-2.500 11-2.500 16 0" stroke="#4d322e" stroke-width="2.600" fill="none" opacity=".75"/>
<path d="M120 110c-2 12-3 26-2 40h13c-2-14-4-28-5-40z" fill="#f8ddd8" opacity=".55"/>
</g>
<!-- name plate -->
<rect x="0" y="113.100" width="95.800" height="35.400" fill="rgba(10,8,6,.52)"/>
<g fill="#fff"><rect x="11.700" y="120.600" width="10.400" height="15" rx="5.200"/><path d="M7.500 130.600l2-0.500c0.400 4.300 3 7 7.400 7s7-2.700 7.400-7l2 0.500c-0.600 5-3.600 8-8.300 8.600v3h-2.200v-3c-4.700-0.600-7.700-3.600-8.300-8.600z"/></g>
</g>
</svg>
<div class="abs nw" style="left:930.800px;top:139.800px;font-size:18.200px;line-height:21px;color:#fff">Mr.Fun</div>

<!-- bottom-left share label -->
<div class="abs" style="left:88px;top:550px;width:186px;height:34.500px;background:rgba(0,0,0,.54)"></div>
<svg class="abs" style="left:95px;top:557px" width="19" height="21" viewBox="0 0 19 21" fill="#fff"><rect x="5.200" y="0.500" width="8.600" height="13" rx="4.300"/><path d="M1.500 8.700h1.800a6.200 6.200 0 0 0 12.400 0h1.800a8 8 0 0 1-7.100 7.900v2.200h3.300v1.800h-8.400v-1.800h3.300v-2.200a8 8 0 0 1-7.100-7.900z"/></svg>
<div class="abs nw" style="left:121px;top:557.500px;font-size:17.800px;line-height:21px;color:#fff">Mr.Fun<span id="shl" class="h" style="font-size:17.800px"></span></div>

<!-- page indicator pill + black bar -->
<div class="abs" style="left:605.200px;top:557.800px;width:58.200px;height:24px;border-radius:12px;background:rgba(80,84,86,.74)"></div>
<div class="abs" style="left:471.500px;top:566.700px;width:326.500px;height:7.200px;border-radius:3.600px;background:#0c0c0c"></div>

<!-- mute button -->
<div class="abs" style="left:1132px;top:461px;width:71.500px;height:71.500px;border-radius:50%;background:rgba(50,52,54,.64)"></div>
<svg class="abs" style="left:1148px;top:474px" width="40" height="44" viewBox="0 0 40 44"><g fill="#f4f5f6"><rect x="12" y="3.300" width="14.600" height="24.500" rx="7.300"/><path d="M6.300 18.500l2.300-0.500c0.500 6.500 4.500 10.600 10.700 10.600s10.300-4.200 10.700-10.600l2.400 0.400c-0.700 7-5 11.800-11.700 12.600v6.300h6.300v2.600h-15.300v-2.600h6.300v-6.300c-6.700-0.800-11.200-5.500-12-12.500z"/></g><path d="M4.600 38.400l30.600-31.200" stroke="#ec8480" stroke-width="2.600" stroke-linecap="round"/></svg>

<!-- CJK-B -->
<svg class="abs" style="left:0;top:0;pointer-events:none" width="1269" height="586" viewBox="0 0 1269 586"><text class="us" x="135.300" y="45.760" font-size="17" font-weight="500" fill="#fff">录制中</text><text class="us" x="177.400" y="574.560" font-size="17.800" font-weight="500" fill="#fff">的屏幕共享</text></svg>
<!-- /CJK-B -->
</body>
</html>
